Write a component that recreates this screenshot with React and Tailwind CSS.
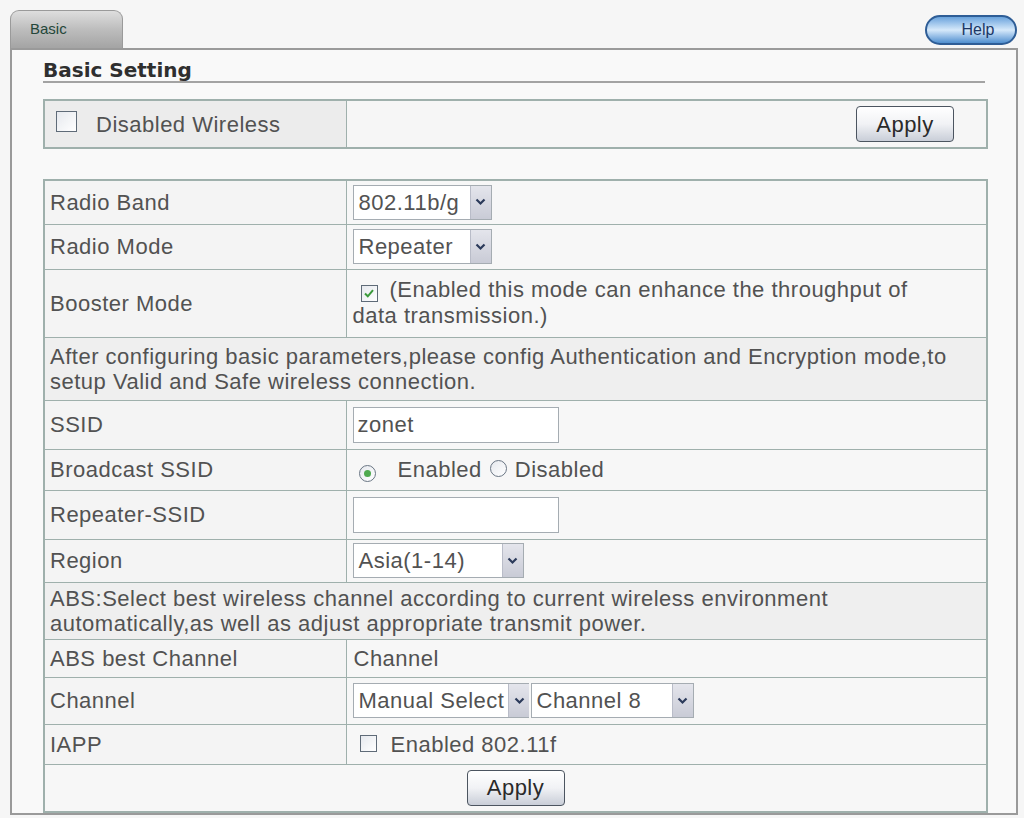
import { useState } from "react";

const labelCls = "border border-[#9fb0ac] pl-[5px] align-middle";
const valueCls = "border border-[#9fb0ac] pl-[6px] align-middle";

function Arrow() {
  return (
    <span className="flex h-full w-[21px] shrink-0 items-center justify-center border-l border-[#b9bcc8] bg-gradient-to-b from-[#e4e5ec] to-[#c9cbd6]">
      <svg width="11" height="8" viewBox="0 0 11 8">
        <path d="M1.5 1.5 L5.5 5.5 L9.5 1.5" fill="none" stroke="#2b3a5a" strokeWidth="2.2" />
      </svg>
    </span>
  );
}

function Select({ value, width }) {
  return (
    <div
      className="flex h-[35px] items-stretch border border-[#a5acb2] bg-white"
      style={{ width }}
    >
      <span className="flex flex-1 items-center pl-[5px] pr-[4px] whitespace-nowrap">{value}</span>
      <Arrow />
    </div>
  );
}

function Checkbox({ checked, big }) {
  return (
    <span
      className={`inline-flex shrink-0 items-center justify-center border border-[#5f6b78] bg-gradient-to-br from-[#e6e9ee] to-white ${
        big ? "h-[21px] w-[21px]" : "h-[17px] w-[17px]"
      }`}
    >
      {checked ? (
        <svg width="12" height="11" viewBox="0 0 12 11">
          <path d="M2 5.5 L4.8 8.3 L10 2.2" fill="none" stroke="#3a9a3a" strokeWidth="2" />
        </svg>
      ) : null}
    </span>
  );
}

function Radio({ checked }) {
  return (
    <span className="inline-flex h-[17px] w-[17px] shrink-0 items-center justify-center rounded-full border border-[#6a7684] bg-gradient-to-br from-[#e6e9ee] to-white">
      {checked ? <span className="h-[7px] w-[7px] rounded-full bg-[#4faa4f]" /> : null}
    </span>
  );
}

function TextInput({ value }) {
  return (
    <div className="flex h-[36px] w-[206px] items-center border border-[#a5acb2] bg-white pl-[4px]">
      {value}
    </div>
  );
}

function ApplyButton() {
  return (
    <button className="h-[36px] w-[98px] rounded-[4px] border border-[#4c5560] bg-gradient-to-b from-white via-[#f1f2f5] to-[#c9ced8] text-[22px] text-[#2a2a2a]">
      Apply
    </button>
  );
}

export default function App() {
  const [rows] = useState([
    { h: 44, label: "Radio Band", value: <Select value="802.11b/g" width={139} /> },
    { h: 45, label: "Radio Mode", value: <Select value="Repeater" width={139} /> },
    {
      h: 68,
      label: "Booster Mode",
      value: (
        <div className="leading-[26px]">
          <span className="ml-[8px] mr-[12px] inline-flex align-[-2px]">
            <Checkbox checked />
          </span>
          (Enabled this mode can enhance the throughput of
          <br />
          data transmission.)
        </div>
      ),
    },
    {
      h: 63,
      note: (
        <>
          After configuring basic parameters,please config Authentication and Encryption mode,to
          <br />
          setup Valid and Safe wireless connection.
        </>
      ),
    },
    { h: 49, label: "SSID", value: <TextInput value="zonet" /> },
    {
      h: 41,
      label: "Broadcast SSID",
      value: (
        <div className="flex items-center">
          <span className="ml-[6px] mr-[22px]">
            <Radio checked />
          </span>
          <span>Enabled</span>
          <span className="ml-[8px] mr-[8px]">
            <Radio />
          </span>
          <span>Disabled</span>
        </div>
      ),
    },
    { h: 49, label: "Repeater-SSID", value: <TextInput value="" /> },
    { h: 43, label: "Region", value: <Select value="Asia(1-14)" width={171} /> },
    {
      h: 57,
      note: (
        <>
          ABS:Select best wireless channel according to current wireless environment
          <br />
          automatically,as well as adjust appropriate transmit power.
        </>
      ),
    },
    { h: 38, label: "ABS best Channel", value: <span className="pl-[1px]">Channel</span> },
    {
      h: 47,
      label: "Channel",
      value: (
        <div className="flex gap-[2px]">
          <Select value="Manual Select" width={176} />
          <Select value="Channel 8" width={163} />
        </div>
      ),
    },
    {
      h: 40,
      label: "IAPP",
      value: (
        <div className="flex items-center">
          <span className="ml-[7px] mr-[14px]">
            <Checkbox />
          </span>
          Enabled 802.11f
        </div>
      ),
    },
  ]);

  return (
    <div
      className="h-[818px] w-[1024px] overflow-hidden bg-[#f6f6f6] text-[22px] tracking-[0.5px] text-[#525252]"
      style={{ fontFamily: '"Liberation Sans", Arial, sans-serif' }}
    >
      {/* tab strip */}
      <div className="flex h-[48px] items-start justify-between pl-[10px] pr-[7px]">
        <div className="mt-[10px] flex h-[38px] w-[113px] items-center rounded-t-[9px] border border-b-0 border-[#9a9a9a] bg-gradient-to-b from-[#dedede] via-[#bdbdbd] to-[#a4a4a4] pl-[19px] text-[15px] tracking-normal text-[#24473a]">
          Basic
        </div>
        <div className="mt-[15px] flex h-[30px] w-[92px] items-center justify-center rounded-full border-2 border-[#2e5d96] bg-gradient-to-b from-[#6aa3dc] via-[#d6e9fa] to-[#4f8fcf] pl-[14px] text-[16px] tracking-normal text-[#1c3766]">
          Help
        </div>
      </div>

      {/* settings panel */}
      <div className="ml-[10px] h-[767px] w-[1008px] border-2 border-[#9a9a9a] bg-[#f9f9f9] px-[31px] pt-[10px]">
        <div
          className="border-b-2 border-[#a3a3a3] text-[20px] leading-[21px] font-bold tracking-normal text-[#2f2f2f]"
          style={{ fontFamily: '"DejaVu Sans", Verdana, sans-serif' }}
        >
          Basic Setting
        </div>

        <table className="mt-[16px] w-[945px] border-collapse border-2 border-[#9fb0ac]">
          <tbody>
            <tr className="h-[48px]">
              <td className={`${labelCls} w-[302px] bg-[#ececec]`}>
                <div className="flex items-center">
                  <span className="ml-[6px] mr-[19px]">
                    <Checkbox big />
                  </span>
                  Disabled Wireless
                </div>
              </td>
              <td className={`${valueCls} bg-[#f6f6f6] pr-[32px] text-right`}>
                <ApplyButton />
              </td>
            </tr>
          </tbody>
        </table>

        <table className="mt-[30px] w-[945px] border-collapse border-2 border-[#9fb0ac]">
          <tbody>
            {rows.map((row, i) =>
              row.note ? (
                <tr key={i} style={{ height: row.h }}>
                  <td colSpan={2} className={`${labelCls} bg-[#efefef] leading-[25px]`}>
                    {row.note}
                  </td>
                </tr>
              ) : (
                <tr key={i} style={{ height: row.h }}>
                  <td className={`${labelCls} w-[302px] bg-[#f4f4f4]`}>{row.label}</td>
                  <td className={`${valueCls} bg-[#f7f7f7]`}>{row.value}</td>
                </tr>
              )
            )}
            <tr className="h-[48px]">
              <td colSpan={2} className="border border-[#9fb0ac] bg-[#f7f7f7] text-center align-middle">
                <ApplyButton />
              </td>
            </tr>
          </tbody>
        </table>
      </div>
    </div>
  );
}
